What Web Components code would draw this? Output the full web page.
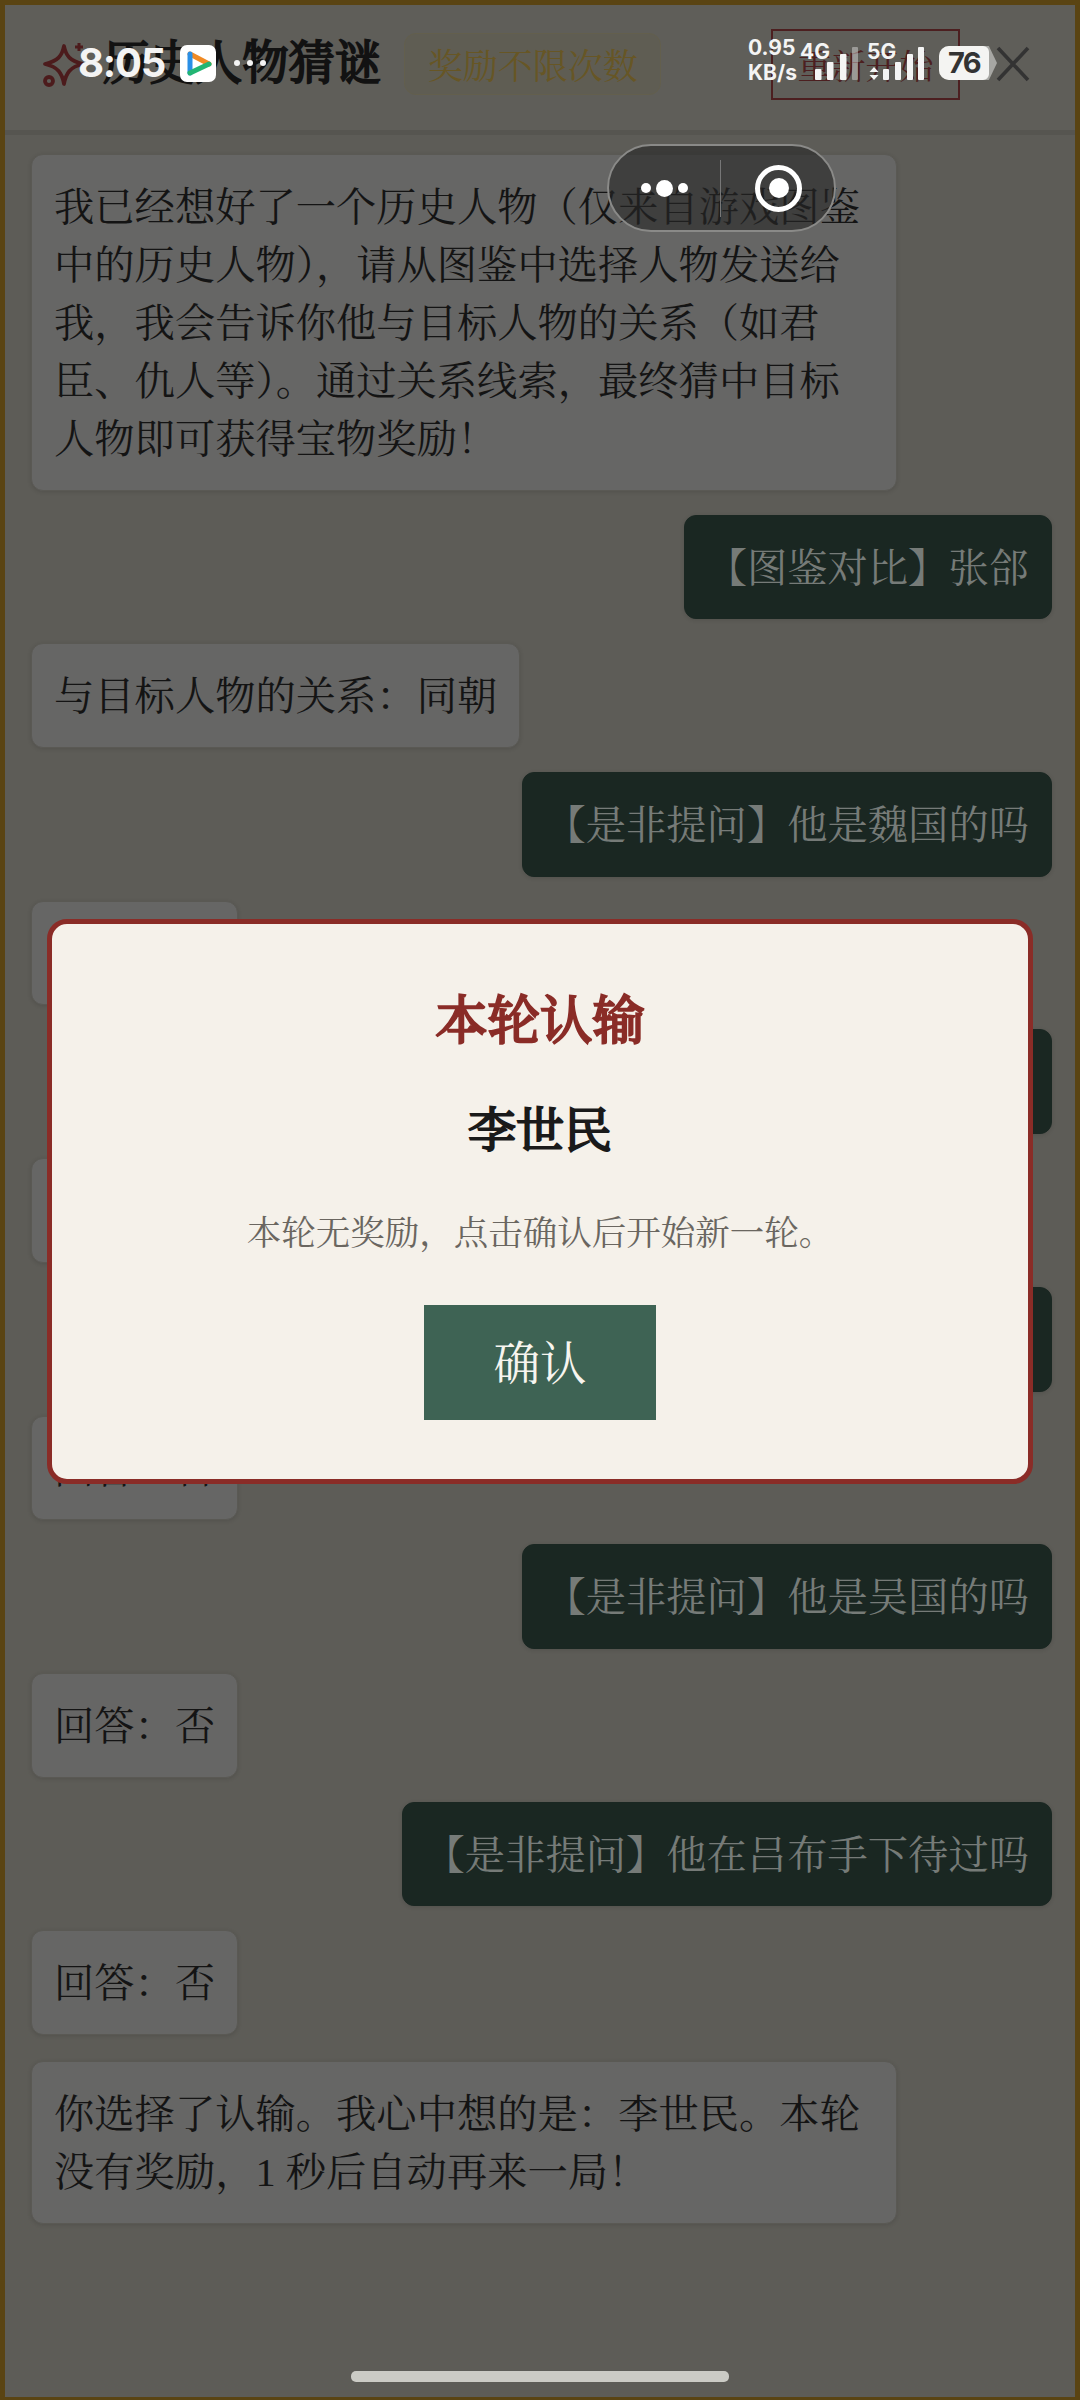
<!DOCTYPE html>
<html lang="zh-CN"><head><meta charset="utf-8"><title>历史人物猜谜</title>
<style>
html,body{margin:0;padding:0;background:#5d5c57}
body{width:1080px;height:2400px;overflow:hidden;font-family:"Liberation Serif","Noto Serif CJK SC","Noto Sans CJK SC",serif}
</style></head><body>
<game-app>
  <game-header slot="header"></game-header>
  <chat-bubble>我已经想好了一个历史人物（仅来自游戏图鉴中的历史人物），请从图鉴中选择人物发送给我，我会告诉你他与目标人物的关系（如君臣、仇人等）。通过关系线索，最终猜中目标人物即可获得宝物奖励！</chat-bubble>
  <chat-bubble side="me">【图鉴对比】张郃</chat-bubble>
  <chat-bubble>与目标人物的关系：同朝</chat-bubble>
  <chat-bubble side="me">【是非提问】他是魏国的吗</chat-bubble>
  <chat-bubble>回答：否</chat-bubble>
  <chat-bubble side="me">【是非提问】他是蜀国的吗</chat-bubble>
  <chat-bubble>回答：否</chat-bubble>
  <chat-bubble side="me">【是非提问】他是晋国的吗</chat-bubble>
  <chat-bubble>回答：否</chat-bubble>
  <chat-bubble side="me">【是非提问】他是吴国的吗</chat-bubble>
  <chat-bubble>回答：否</chat-bubble>
  <chat-bubble side="me">【是非提问】他在吕布手下待过吗</chat-bubble>
  <chat-bubble>回答：否</chat-bubble>
  <chat-bubble style="margin-top:2.5px">你选择了认输。我心中想的是：李世民。本轮没有奖励，1 秒后自动再来一局！</chat-bubble>
  <result-dialog slot="overlay" heading="本轮认输" name="李世民" note="本轮无奖励，点击确认后开始新一轮。" action="确认"></result-dialog>
  <phone-status slot="system"></phone-status>
  <mini-capsule slot="system"></mini-capsule>
  <home-bar slot="system"></home-bar>
</game-app>
<script>
const def=(name,html,init)=>customElements.define(name,class extends HTMLElement{
  constructor(){super();this.attachShadow({mode:'open'}).innerHTML=html;}
  connectedCallback(){init&&init(this)}
});
def('game-app',`<style>
:host{display:block;position:relative;width:1080px;height:2400px;box-sizing:border-box;border:5px solid #5a4413;border-bottom-width:3px;overflow:hidden;background:#5d5c57}
.chat{display:flex;flex-direction:column;gap:24px;padding:19px 23px 0 26px}
</style><slot name="header"></slot><div class="chat"><slot></slot></div><slot name="overlay"></slot><slot name="system"></slot>`);
def('game-header',`<style>
:host{display:flex;align-items:center;height:125px;box-sizing:border-box;border:0;padding:0 45px 7px 35px;background:#5f5e59;color:#111;box-shadow:0 5px 0 #565550;position:relative;margin-bottom:5px}
svg.star{width:46px;height:48px;flex:none}
h1{margin:0 0 0 17px;font:400 46.4px/1 "Liberation Serif","Noto Serif CJK SC","Noto Sans CJK SC",serif;-webkit-text-stroke:2px #121212;white-space:nowrap;color:#121212}
.chip{margin-left:23px;box-sizing:border-box;height:62px;width:257px;display:flex;align-items:center;justify-content:center;border:1.5px solid #635f4d;border-radius:12px;font-size:35px;color:#675625;background:#5f5d53;white-space:nowrap}
.restart{margin-left:auto;box-sizing:border-box;width:189px;height:71px;display:flex;align-items:center;justify-content:center;border:2.5px solid #4c1f20;font-size:34px;color:#4c1f20;white-space:nowrap}
svg.x{width:34px;height:36px;margin-left:36px;flex:none}
</style>
<svg class="star" viewBox="0 0 46 48" fill="none" stroke="#4c1b1c" stroke-width="3.8" stroke-linejoin="round"><path d="M24 6C26 16 30 21 43 24C30 27 26 33 24 44C22 33 18 27 5 24C18 21 22 16 24 6Z"/><circle cx="9" cy="41" r="4"/><path d="M39 3v8M35 7h8" stroke-width="3"/></svg>
<h1>历史人物猜谜</h1><div class="chip">奖励不限次数</div><div class="restart">重新开始</div>
<svg class="x" viewBox="0 0 34 36" stroke="#333" stroke-width="3.6" fill="none"><path d="M2 2L32 34M32 2L2 34"/></svg>`);
def('chat-bubble',`<style>
:host{display:block;box-sizing:border-box;max-width:866px;width:fit-content;padding:24px 22px 20.7px;border:1px solid #5a5954;border-radius:12px;background:#666665;color:#141414;font-size:40.3px;line-height:58px;box-shadow:0 1px 4px rgba(0,0,0,.12)}
:host([side="me"]){align-self:flex-end;background:#1a2722;border-color:#1a2722;color:#767b78}
</style><slot></slot>`);
def('result-dialog',`<style>
:host{position:absolute;inset:0;display:flex;align-items:center;justify-content:center;z-index:2}
.box{box-sizing:border-box;width:986px;height:565px;border:5px solid #8a2c27;border-radius:20px;background:#f5f1ea;display:flex;flex-direction:column;align-items:center;padding-top:66px}
.t{font-size:52.4px;font-weight:400;-webkit-text-stroke:2.4px #8a2c27;color:#8a2c27;line-height:62px}
.n{font-size:48px;font-weight:400;-webkit-text-stroke:2.1px #1a1a1a;color:#1a1a1a;line-height:60px;margin-top:49px}
.d{font-size:34.5px;color:#6a6660;line-height:50px;margin-top:47px}
button{margin-top:47px;width:232px;height:115px;border:0;padding:0 0 5px;background:#3e6354;color:#f7f5ef;font:inherit;font-size:46.5px}
</style><div class="box"><div class="t" id="t"></div><div class="n" id="n"></div><div class="d" id="d"></div><button id="b"></button></div>`,e=>{const s=e.shadowRoot;s.getElementById('t').textContent=e.getAttribute('heading');s.getElementById('n').textContent=e.getAttribute('name');s.getElementById('d').textContent=e.getAttribute('note');s.getElementById('b').textContent=e.getAttribute('action');});
def('phone-status',`<style>
:host{position:absolute;left:-5px;top:-5px;width:1080px;height:82px;z-index:3;color:#f4f4f4;font-family:Inter,Roboto,"Liberation Sans",sans-serif}
.row{display:flex;align-items:flex-end;height:100%;padding:0 83px 0 78px;box-sizing:border-box}
.time{font-size:40px;font-weight:700;letter-spacing:-1.2px;line-height:34px;align-self:center;margin-top:44px;width:86px;flex:none}
.app{margin-left:16px;width:36px;height:37px;align-self:flex-end;flex:none}
.dots{margin-left:18px;display:flex;gap:7px;align-self:flex-end;margin-bottom:16px}.dots i{width:6px;height:6px;border-radius:50%;background:#f4f4f4}
.r{margin-left:auto;display:flex;align-items:flex-end}
.speed{font-size:21px;font-weight:700;line-height:25px;white-space:pre;width:52px;margin-bottom:-3px}
.sig{display:grid;margin-bottom:2px}.sig>*{grid-area:1/1}
.lab{font-size:21px;font-weight:700;line-height:20px;align-self:start}
.batt{position:relative;margin-left:15px;width:58px;height:34px;margin-bottom:2px;border-radius:10px 0 0 10px;background:#a7a7a3;clip-path:polygon(0 0,86% 0,100% 50%,86% 100%,0 100%)}
.batt b{position:absolute;left:0;top:0;bottom:0;width:50px;background:#f4f4f2;border-radius:10px 6px 6px 10px;color:#333;font:700 29px/34px Inter,Roboto,sans-serif;letter-spacing:-1.5px;text-align:center}
</style><div class="row"><span class="time">8:05</span>
<svg class="app" viewBox="0 0 36 37"><rect width="36" height="37" rx="7" fill="#fff"/><path d="M10 9L29 19" stroke="#f08a24" stroke-width="5" stroke-linecap="round"/><path d="M10 9V28" stroke="#2a8fe6" stroke-width="5" stroke-linecap="round"/><path d="M10 28L29 19" stroke="#22b573" stroke-width="5" stroke-linecap="round"/></svg>
<span class="dots"><i></i><i></i><i></i></span>
<div class="r"><div class="speed">0.95
KB/s</div>
<div class="sig" style="width:58px;height:38px"><span class="lab">4G</span>
<svg width="58" height="38" viewBox="0 0 58 38" fill="#f4f4f4"><rect x="15" y="27" width="6.5" height="11" rx="1"/><rect x="27" y="20" width="6.5" height="18" rx="1"/><rect x="40" y="12" width="6.5" height="26" rx="1"/><rect x="52" y="5" width="6" height="33" rx="1" opacity=".4"/></svg></div>
<div class="sig" style="width:57px;height:38px;margin-left:9px"><span class="lab">5G</span>
<svg width="57" height="38" viewBox="0 0 57 38" fill="#f4f4f4"><path d="M7 25L11.5 30H2.5ZM7 38L2.5 33H11.5Z"/><rect x="16" y="27" width="6" height="11" rx="1"/><rect x="28" y="20" width="6" height="18" rx="1"/><rect x="40" y="12" width="6" height="26" rx="1"/><rect x="51" y="5" width="6" height="33" rx="1"/></svg></div>
<div class="batt"><b>76</b></div></div></div>`);
def('mini-capsule',`<style>
:host{position:absolute;left:602px;top:139px;width:229px;height:88px;box-sizing:border-box;border:2px solid #8a8a88;border-radius:44px;background:rgba(38,38,38,.62);z-index:3;display:flex;align-items:center}
.a,.b{flex:1;display:flex;align-items:center;justify-content:center}
.line{width:1.5px;height:57px;background:#777}
.a i{display:block;border-radius:50%;background:#fff;width:10px;height:10px}.a i.m{width:17px;height:17px;margin:0 5px}
.b{padding-left:2px}
.ring{width:47px;height:47px;box-sizing:border-box;border:5px solid #fff;border-radius:50%;display:flex;align-items:center;justify-content:center}.ring i{width:20px;height:20px;border-radius:50%;background:#fff}
</style><div class="a"><i></i><i class="m"></i><i></i></div><div class="line"></div><div class="b"><div class="ring"><i></i></div></div>`);
def('home-bar',`<style>
:host{position:absolute;left:346px;top:2366px;width:378px;height:11px;border-radius:5px;background:#cbcbc5;z-index:3}
</style>`);
</script></body></html>
